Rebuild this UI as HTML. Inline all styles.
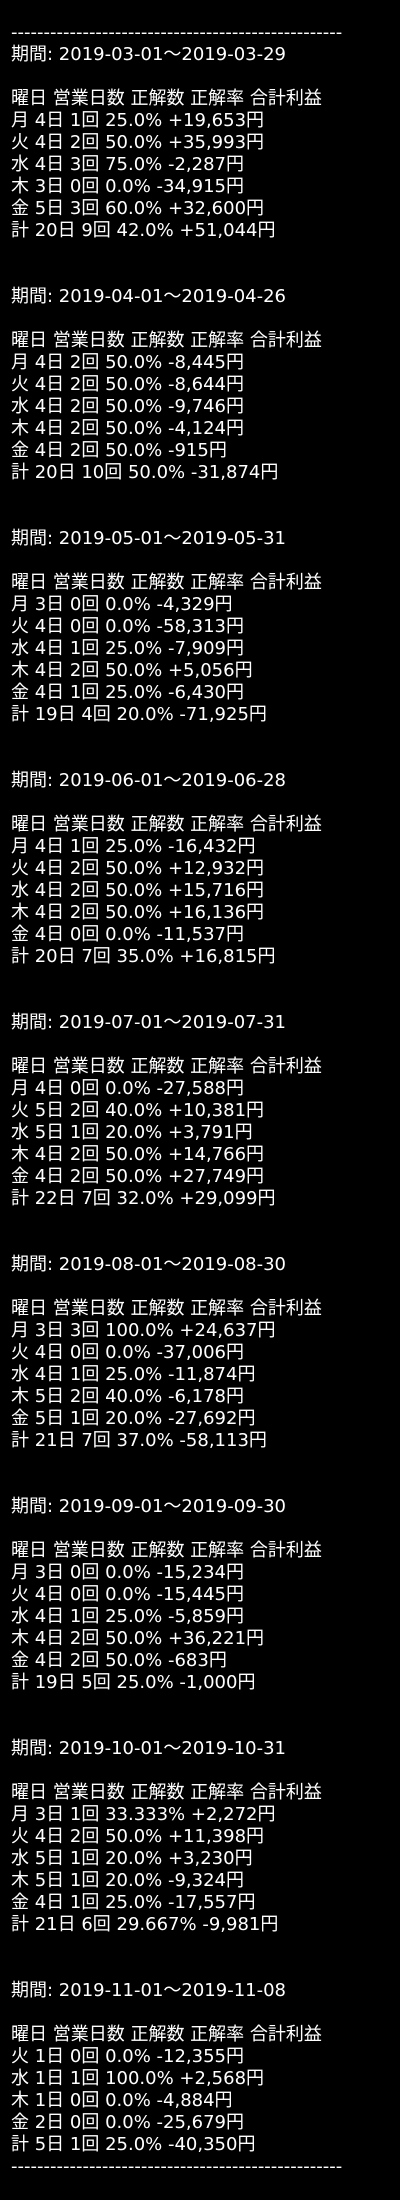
<!DOCTYPE html>
<html><head><meta charset="utf-8"><style>
html,body{margin:0;padding:0;background:#000;}
pre{margin:0;padding:22px 0 0 11px;color:#fff;font-family:"DejaVu Sans","Noto Sans CJK JP",sans-serif;font-size:18px;line-height:22px;white-space:pre;}
</style></head><body><pre>---------------------------------------------------
期間: 2019-03-01〜2019-03-29

曜日 営業日数 正解数 正解率 合計利益
月 4日 1回 25.0% +19,653円
火 4日 2回 50.0% +35,993円
水 4日 3回 75.0% -2,287円
木 3日 0回 0.0% -34,915円
金 5日 3回 60.0% +32,600円
計 20日 9回 42.0% +51,044円


期間: 2019-04-01〜2019-04-26

曜日 営業日数 正解数 正解率 合計利益
月 4日 2回 50.0% -8,445円
火 4日 2回 50.0% -8,644円
水 4日 2回 50.0% -9,746円
木 4日 2回 50.0% -4,124円
金 4日 2回 50.0% -915円
計 20日 10回 50.0% -31,874円


期間: 2019-05-01〜2019-05-31

曜日 営業日数 正解数 正解率 合計利益
月 3日 0回 0.0% -4,329円
火 4日 0回 0.0% -58,313円
水 4日 1回 25.0% -7,909円
木 4日 2回 50.0% +5,056円
金 4日 1回 25.0% -6,430円
計 19日 4回 20.0% -71,925円


期間: 2019-06-01〜2019-06-28

曜日 営業日数 正解数 正解率 合計利益
月 4日 1回 25.0% -16,432円
火 4日 2回 50.0% +12,932円
水 4日 2回 50.0% +15,716円
木 4日 2回 50.0% +16,136円
金 4日 0回 0.0% -11,537円
計 20日 7回 35.0% +16,815円


期間: 2019-07-01〜2019-07-31

曜日 営業日数 正解数 正解率 合計利益
月 4日 0回 0.0% -27,588円
火 5日 2回 40.0% +10,381円
水 5日 1回 20.0% +3,791円
木 4日 2回 50.0% +14,766円
金 4日 2回 50.0% +27,749円
計 22日 7回 32.0% +29,099円


期間: 2019-08-01〜2019-08-30

曜日 営業日数 正解数 正解率 合計利益
月 3日 3回 100.0% +24,637円
火 4日 0回 0.0% -37,006円
水 4日 1回 25.0% -11,874円
木 5日 2回 40.0% -6,178円
金 5日 1回 20.0% -27,692円
計 21日 7回 37.0% -58,113円


期間: 2019-09-01〜2019-09-30

曜日 営業日数 正解数 正解率 合計利益
月 3日 0回 0.0% -15,234円
火 4日 0回 0.0% -15,445円
水 4日 1回 25.0% -5,859円
木 4日 2回 50.0% +36,221円
金 4日 2回 50.0% -683円
計 19日 5回 25.0% -1,000円


期間: 2019-10-01〜2019-10-31

曜日 営業日数 正解数 正解率 合計利益
月 3日 1回 33.333% +2,272円
火 4日 2回 50.0% +11,398円
水 5日 1回 20.0% +3,230円
木 5日 1回 20.0% -9,324円
金 4日 1回 25.0% -17,557円
計 21日 6回 29.667% -9,981円


期間: 2019-11-01〜2019-11-08

曜日 営業日数 正解数 正解率 合計利益
火 1日 0回 0.0% -12,355円
水 1日 1回 100.0% +2,568円
木 1日 0回 0.0% -4,884円
金 2日 0回 0.0% -25,679円
計 5日 1回 25.0% -40,350円
---------------------------------------------------
</pre></body></html>
